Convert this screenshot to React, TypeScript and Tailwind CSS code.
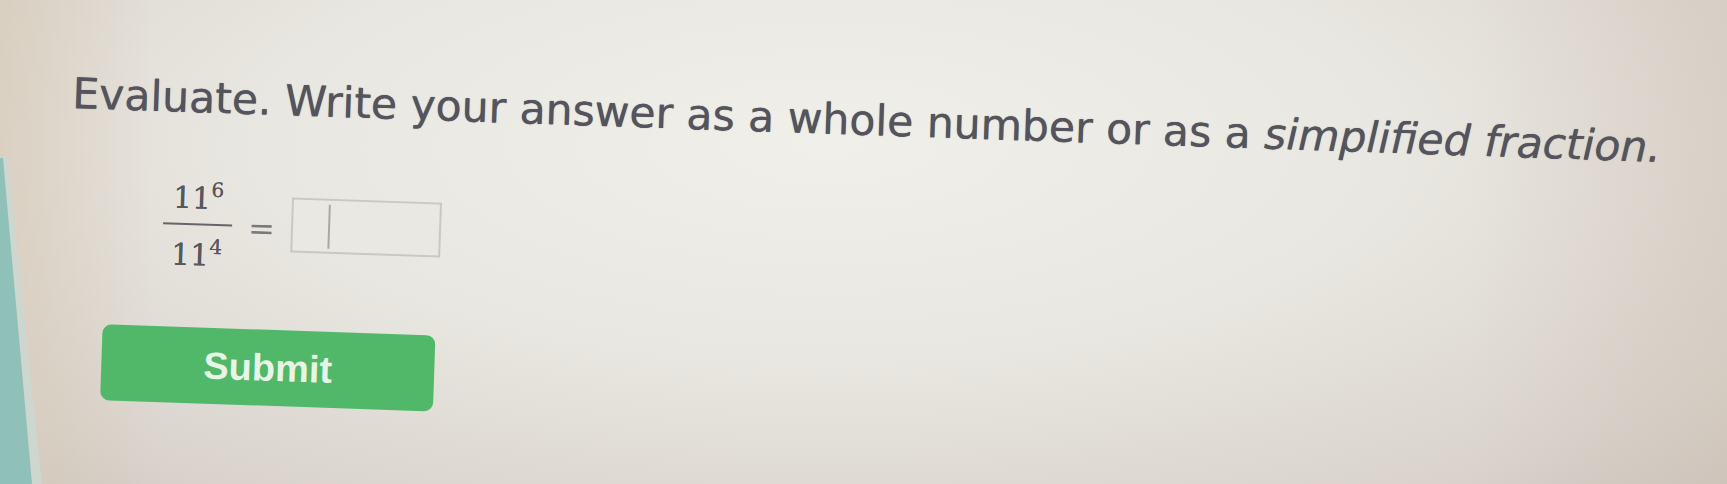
import React from "react";

function Fraction() {
  return (
    <div className="flex flex-col items-center w-[69px]" style={{ fontFamily: '"DejaVu Serif", serif' }}>
      <div className="h-[34px] leading-[34px] text-[30px] text-[#58575d] whitespace-nowrap [text-shadow:0_0_0.6px_#58575d]">
        11<span className="text-[20px] leading-none align-[12px]">6</span>
      </div>
      <div className="mt-[10px] h-[2px] w-[69px] bg-[#66656a]" />
      <div className="mt-[11px] h-[34px] leading-[34px] text-[30px] text-[#58575d] whitespace-nowrap [text-shadow:0_0_0.6px_#58575d]">
        11<span className="text-[20px] leading-none align-[12px]">4</span>
      </div>
    </div>
  );
}

export default function App() {
  return (
    <div className="relative w-[1727px] h-[484px] overflow-hidden bg-[radial-gradient(ellipse_at_48%_30%,#f0efea_0%,#e9e7e1_45%,#d9d3cc_85%,#cfc7c0_100%)]">
      <div className="absolute inset-0 bg-[linear-gradient(90deg,rgba(214,200,180,0.6)_0%,rgba(214,200,180,0)_9%,rgba(0,0,0,0)_85%,rgba(205,190,175,0.35)_100%)]" />
      <svg className="absolute left-0 top-0" width="60" height="484" viewBox="0 0 60 484">
        <polygon points="0,158 8,158 42,484 0,484" fill="#cdd6cf" />
        <polygon points="0,158 3,158 32,484 0,484" fill="#8fc1b8" />
      </svg>

      <div className="relative pl-[72px] pt-[70px] rotate-[1.95deg] origin-[72px_108px]">
        <p
          className="text-[42.5px] leading-[48px] text-[#55545c] whitespace-nowrap [text-shadow:0_0_0.8px_#55545c]"
          style={{ fontFamily: '"DejaVu Sans", Verdana, sans-serif' }}
        >
          Evaluate. Write your answer as a whole number or as a <em className="italic">simplified fraction.</em>
        </p>

        <div className="mt-[57px] ml-[95px] flex items-start">
          <Fraction />
          <span
            className="mt-[30px] ml-[16px] h-[34px] leading-[34px] text-[32px] text-[#7a797e]"
            style={{ fontFamily: '"DejaVu Serif", serif' }}
          >
            =
          </span>
          <div className="mt-[15px] ml-[16px] w-[150px] h-[55px] border-2 border-[#c9c8c2] bg-[#e9e8e3] flex items-center">
            <div className="ml-[35px] w-[2px] h-[44px] bg-[#a9a8a6]" />
          </div>
        </div>

        <button
          className="mt-[57px] ml-[38px] w-[333px] h-[76px] rounded-[9px] bg-[#50b868] flex items-center justify-center text-[38px] font-bold text-[#e8f4e6]"
          style={{ fontFamily: '"Liberation Sans", Arial, sans-serif' }}
        >
          Submit
        </button>
      </div>
    </div>
  );
}
